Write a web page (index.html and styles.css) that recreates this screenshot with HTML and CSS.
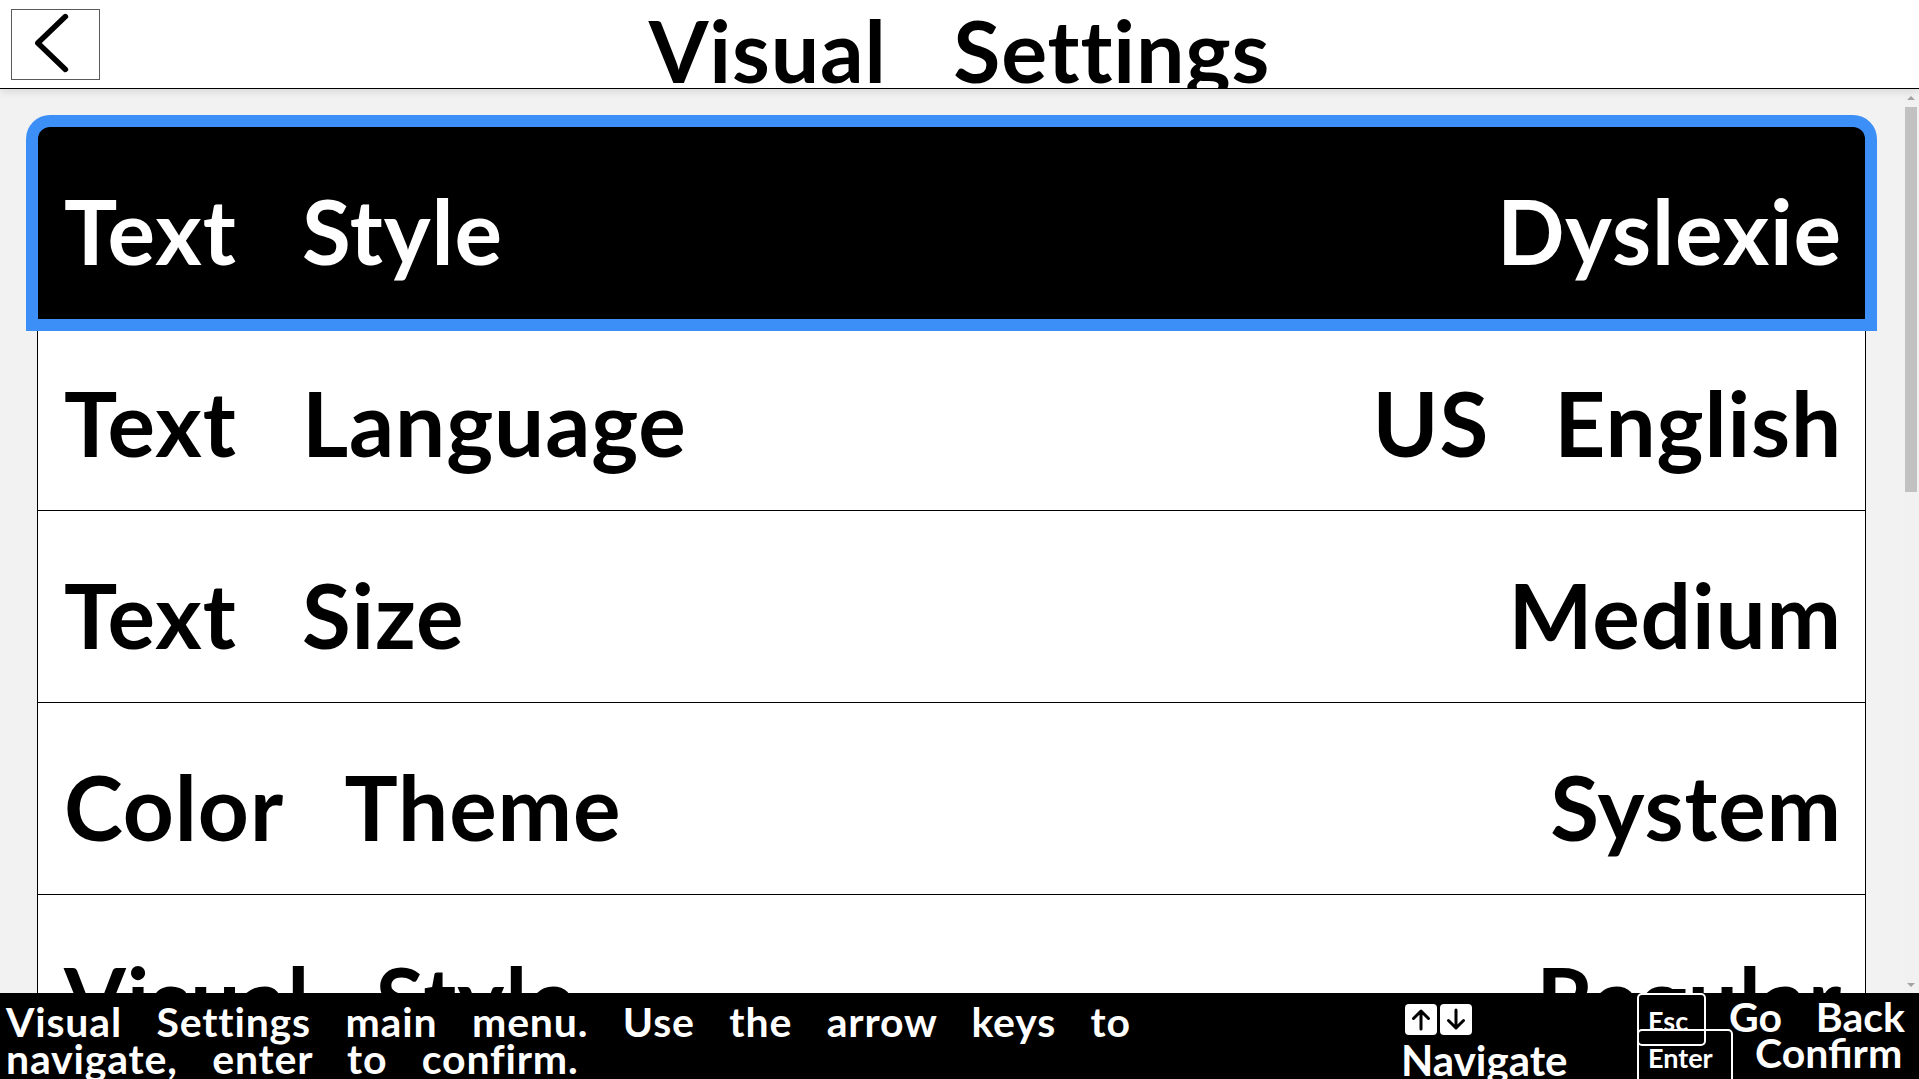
FILE: index.html
```html
<!DOCTYPE html>
<html lang="en">
<head>
<meta charset="utf-8">
<title>Visual Settings</title>
<link rel="stylesheet" href="styles.css">
</head>
<body>
<div class="app">
  <header class="topbar">
    <button class="back" aria-label="Back">
      <svg viewBox="0 0 87 69" width="87" height="69" aria-hidden="true">
        <path d="M53.4 6.6 L25.8 33 L53.4 59.4" fill="none" stroke="#000" stroke-width="5.5" stroke-linecap="round" stroke-linejoin="round"/>
      </svg>
    </button>
    <h1 class="title">Visual Settings</h1>
    <div class="spacer"></div>
  </header>

  <main class="main">
    <div class="viewport">
      <ul class="list">
        <li class="row selected"><span class="label">Text Style</span><span class="value">Dyslexie</span></li>
        <li class="row"><span class="label">Text Language</span><span class="value">US English</span></li>
        <li class="row"><span class="label">Text Size</span><span class="value">Medium</span></li>
        <li class="row"><span class="label">Color Theme</span><span class="value">System</span></li>
        <li class="row"><span class="label">Visual Style</span><span class="value">Regular</span></li>
        <li class="row"><span class="label">Reduce Motion</span><span class="value">Off</span></li>
        <li class="row"><span class="label">High Contrast</span><span class="value">Off</span></li>
        <li class="row"><span class="label">Cursor Size</span><span class="value">Normal</span></li>
      </ul>
    </div>
    <div class="scrollbar" aria-hidden="true">
      <div class="sb-btn"><span class="tri up"></span></div>
      <div class="sb-track"><div class="sb-thumb"></div></div>
      <div class="sb-btn"><span class="tri down"></span></div>
    </div>
  </main>

  <footer class="footer">
    <div class="hint">Visual Settings main menu. Use the arrow keys to<br>navigate, enter to confirm.</div>
    <div class="nav">
      <div class="arrows">
        <svg class="akey" viewBox="0 0 32 31" width="32" height="31" aria-hidden="true">
          <rect x="0" y="0" width="32" height="31" rx="4" fill="#fff"/>
          <path d="M16 25 V7 M8.5 14.5 L16 7 L23.5 14.5" fill="none" stroke="#000" stroke-width="3" stroke-linecap="round" stroke-linejoin="round"/>
        </svg>
        <svg class="akey" viewBox="0 0 32 31" width="32" height="31" aria-hidden="true">
          <rect x="0" y="0" width="32" height="31" rx="4" fill="#fff"/>
          <path d="M16 6 V24 M8.5 16.5 L16 24 L23.5 16.5" fill="none" stroke="#000" stroke-width="3" stroke-linecap="round" stroke-linejoin="round"/>
        </svg>
      </div>
      <div class="nav-label">Navigate</div>
    </div>
    <div class="keys">
      <div class="krow">
        <span class="key key-esc">Esc</span>
        <span class="klabel">Go Back</span>
      </div>
      <div class="krow second">
        <span class="key key-enter">Enter</span>
        <span class="klabel">Confirm</span>
      </div>
    </div>
  </footer>
</div>
</body>
</html>
```

FILE: styles.css
```css
* { box-sizing: border-box; }

html, body {
  margin: 0;
  padding: 0;
  height: 100%;
}

body {
  font-family: "Lato", "Open Sans", sans-serif;
  font-weight: 700;
  background: #f2f2f2;
  color: #000;
  overflow: hidden;
}

.app {
  height: 100vh;
  display: flex;
  flex-direction: column;
}

/* ---------- header ---------- */
.topbar {
  flex: 0 0 89px;
  display: grid;
  grid-template-columns: 1fr auto 1fr;
  align-items: start;
  background: #fff;
  border-bottom: 1px solid #000;
  overflow: hidden;
  position: relative;
  z-index: 2;
  box-shadow: 0 3px 8px rgba(0, 0, 0, 0.10);
}

.back {
  justify-self: start;
  margin: 9px 0 0 11px;
  width: 89px;
  height: 71px;
  padding: 0;
  border: 1px solid #5a5a5a;
  background: #fff;
  display: block;
}

.back svg { display: block; }

.title {
  margin: 0;
  padding-top: 7px;
  font-size: 86px;
  line-height: 86px;
  font-weight: 700;
  white-space: nowrap;
  word-spacing: 0.52em;
  letter-spacing: 0.01em;
}

/* ---------- main ---------- */
.main {
  flex: 1 1 auto;
  min-height: 0;
  display: flex;
}

.viewport {
  flex: 1 1 auto;
  overflow: hidden;
  padding: 38px 37px 0 37px;
}

.list {
  list-style: none;
  margin: 0;
  padding: 0;
  background: #fff;
  border-left: 1px solid #000;
  border-right: 1px solid #000;
}

.row {
  height: 192px;
  display: flex;
  align-items: center;
  justify-content: space-between;
  padding: 18px 23px 0 26px;
  border-bottom: 1px solid #000;
  font-size: 89px;
  line-height: 1.2;
  white-space: nowrap;
  word-spacing: 0.48em;
  letter-spacing: 0.01em;
}

.row.selected {
  position: relative;
  z-index: 1;
  background: #000;
  color: #fff;
  border-radius: 12px 12px 0 0;
  box-shadow: 0 0 0 12px #3c8ff6;
}

/* ---------- scrollbar ---------- */
.scrollbar {
  flex: 0 0 16px;
  display: flex;
  flex-direction: column;
  background: #f1f1f1;
}

.sb-btn {
  flex: 0 0 17px;
  display: flex;
  align-items: center;
  justify-content: center;
}

.tri {
  width: 0;
  height: 0;
  border-left: 4px solid transparent;
  border-right: 4px solid transparent;
}

.tri.up { border-bottom: 4px solid #a3a3a3; }
.tri.down { border-top: 4px solid #a3a3a3; }

.sb-track {
  flex: 1 1 auto;
  padding: 1px 2px 0;
}

.sb-thumb {
  height: 385px;
  background: #c1c1c1;
}

/* ---------- footer ---------- */
.footer {
  flex: 0 0 86px;
  background: #000;
  color: #fff;
  display: grid;
  grid-template-columns: 1400px 237px 1fr;
  overflow: hidden;
  font-size: 41px;
  line-height: 37px;
}

.hint {
  padding: 10px 0 0 6px;
  white-space: nowrap;
  word-spacing: 0.58em;
  letter-spacing: 0.02em;
}

.nav {
  padding-top: 11px;
}

.arrows {
  display: flex;
  gap: 3px;
  margin-left: 5px;
}

.akey { display: block; }

.nav-label {
  margin-top: 7px;
  margin-left: 1px;
  font-size: 42px;
  line-height: 37px;
  white-space: nowrap;
}

.keys {
  display: flex;
  flex-direction: column;
}

.krow {
  display: flex;
  align-items: flex-start;
}

.krow.second {
  margin-top: -17px;
}

.key {
  display: block;
  border: 2px solid #fff;
  border-radius: 5px;
  font-size: 27px;
  line-height: 27px;
  padding: 12px 9px 10px;
  white-space: nowrap;
}

.key-esc { width: 69px; height: 53px; }
.key-enter { width: 96px; height: 56px; padding-top: 13px; }

.klabel {
  padding-top: 5px;
  margin-left: 23px;
  white-space: nowrap;
  word-spacing: 0.58em;
}

.krow.second .klabel { margin-left: 22px; }
```
